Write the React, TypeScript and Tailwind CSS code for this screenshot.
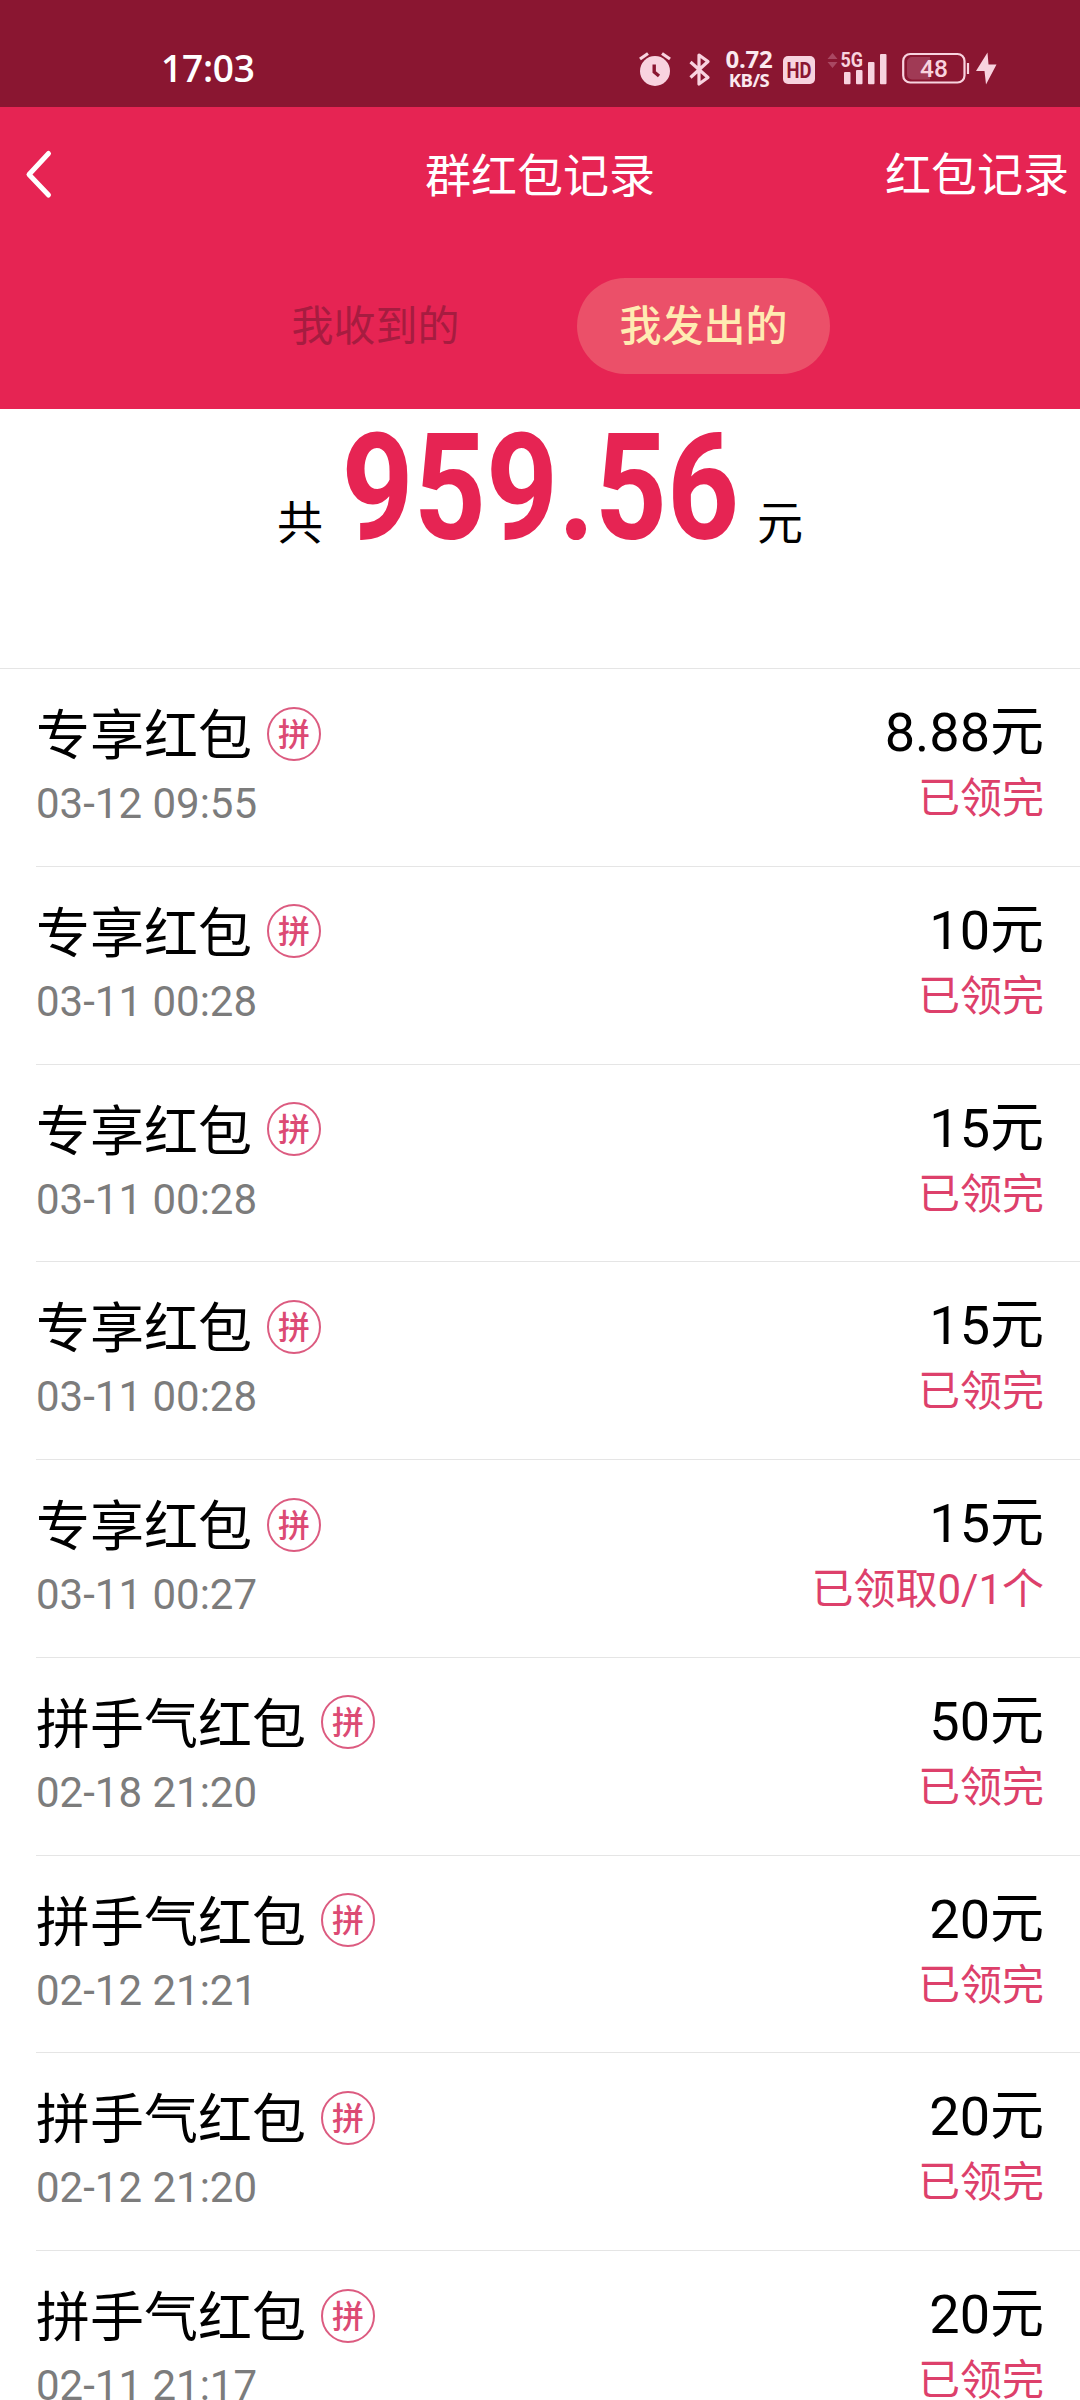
type Packet = { title: string; time: string; amount: string; status: string };

const packets: Packet[] = [
  { title: '专享红包', time: '03-12 09:55', amount: '8.88', status: '已领完' },
  { title: '专享红包', time: '03-11 00:28', amount: '10', status: '已领完' },
  { title: '专享红包', time: '03-11 00:28', amount: '15', status: '已领完' },
  { title: '专享红包', time: '03-11 00:28', amount: '15', status: '已领完' },
  { title: '专享红包', time: '03-11 00:27', amount: '15', status: '已领取0/1个' },
  { title: '拼手气红包', time: '02-18 21:20', amount: '50', status: '已领完' },
  { title: '拼手气红包', time: '02-12 21:21', amount: '20', status: '已领完' },
  { title: '拼手气红包', time: '02-12 21:20', amount: '20', status: '已领完' },
  { title: '拼手气红包', time: '02-11 21:17', amount: '20', status: '已领完' },
];

function AlarmIcon() {
  return (
    <svg className="h-9 w-8" viewBox="0 0 32 36" fill="none">
      <path d="M1 8 9 2.500M31 8 23 2.500" stroke="#f8d3df" strokeWidth="3.200" />
      <circle cx="16" cy="20" r="15" fill="#f8d3df" />
      <path d="M15.200 13.500v7.500l4.800 4" stroke="#8a1631" strokeWidth="3.400" />
    </svg>
  );
}

function BluetoothIcon() {
  return (
    <svg className="ml-[18px] h-9 w-[22px]" viewBox="0 0 22 36" fill="none">
      <path d="M1.500 11 19 26.500 10 33V4l9 6.500L1.500 26.500" stroke="#f8d3df" strokeWidth="3.200" strokeLinejoin="round" />
    </svg>
  );
}

function SignalIcon() {
  return (
    <svg className="ml-[11px] h-9 w-[62px]" viewBox="0 0 62 36">
      <path d="M1.500 8 6.500 2l5 6zM1.500 11l5 6 5-6z" fill="#a94862" />
      <text x="14.500" y="16" fill="#f8d3df" fontFamily="Roboto" fontWeight="700" fontSize="20" textLength="22.500" lengthAdjust="spacingAndGlyphs">5G</text>
      <g fill="#f8d3df">
        <rect x="18" y="21" width="6.500" height="12.300" rx="1" />
        <rect x="30" y="19" width="6.500" height="14.300" rx="1" />
        <rect x="42" y="11" width="6.500" height="22.300" rx="1" />
        <rect x="54" y="3" width="6.500" height="30.300" rx="1" />
      </g>
    </svg>
  );
}

function BatteryIcon() {
  return (
    <svg className="ml-[14px] h-9 w-[68px]" viewBox="0 0 68 36" fill="none">
      <path d="M10 6h18v22.500H10a5 5 0 0 1-5-5v-12.500a5 5 0 0 1 5-5z" fill="#a03a55" />
      <rect x="1.200" y="3" width="61.300" height="28.500" rx="7" stroke="#f8d3df" strokeWidth="2.200" />
      <path d="M66 12v11" stroke="#f8d3df" strokeWidth="2.200" />
      <text x="32" y="26" textAnchor="middle" fill="#f8d3df" fontFamily="Roboto" fontWeight="500" fontSize="24.500">48</text>
    </svg>
  );
}

function StatusBar() {
  return (
    <div className="flex h-[107px] items-start bg-[#8a1631] pt-[51px]">
      <div className="-mt-[1px] ml-[161px] h-9 w-[478px] font-['Open_Sans'] text-[37px] leading-9 font-semibold tracking-[-0.2px] text-white">17:03</div>
      <AlarmIcon />
      <BluetoothIcon />
      <div className="-mt-[3px] ml-[10px] w-[56px] text-center font-['Open_Sans'] font-bold whitespace-nowrap text-[#fbe9ef]">
        <div className="text-[24px] leading-[22px] tracking-[-0.3px]">0.72</div>
        <div className="text-[18.500px] leading-[20px] tracking-[-0.5px]">KB/S</div>
      </div>
      <div className="mt-[5px] ml-[6px] flex h-7 w-8 items-center justify-center rounded-[5px] bg-[#f8d3df] font-['Roboto'] text-[22px] font-bold text-[#8a1631]">
        <span className="scale-x-[0.84]">HD</span>
      </div>
      <SignalIcon />
      <BatteryIcon />
      <svg className="ml-[5px] h-9 w-[22px]" viewBox="0 0 22 36" fill="#f8d3df">
        <path d="M12.500 1.500 1 20h8.500L11 33.500 21.500 13.500h-8z" />
      </svg>
    </div>
  );
}

function Header() {
  return (
    <header className="flex h-[302px] flex-col bg-[#e62453] text-white">
      <div className="grid h-[136px] grid-cols-3 items-center">
        <svg className="-mt-[2px] ml-6 h-14 w-8" viewBox="0 0 32 56" fill="none">
          <path d="M24.500 7.500 5 28.500 24.500 49" stroke="white" strokeWidth="5" strokeLinecap="round" strokeLinejoin="round" />
        </svg>
        <h1 className="mt-[2px] text-center text-[46px] leading-[60px] whitespace-nowrap">群红包记录</h1>
        <div className="-mt-[1px] pr-[11px] text-right text-[46px] leading-[60px] whitespace-nowrap">红包记录</div>
      </div>
      <div className="mt-[35px] flex items-center">
        <div className="ml-[249px] flex h-24 w-[253px] items-center justify-center text-[42px] text-[#a61c40]">我收到的</div>
        <div className="ml-[75px] flex h-24 w-[253px] items-center justify-center rounded-full bg-[#eb5069] text-[42px] font-medium text-[#ffebb2]">我发出的</div>
      </div>
    </header>
  );
}

function Total() {
  return (
    <section className="flex h-[259px] items-baseline justify-center text-[46px] text-black">
      <span>共</span>
      <span className="mx-[17px] flex w-[400px] justify-center font-['Roboto'] text-[149px] leading-[158px] font-bold text-[#e62453]">
        <span className="scale-x-[0.845]">959.56</span>
      </span>
      <span>元</span>
    </section>
  );
}

function Row({ item, first }: { item: Packet; first: boolean }) {
  return (
    <li className={first ? 'h-[197.750px] border-t border-[#e5e5e5] pl-9' : 'h-[197.750px] pl-9'}>
      <div className={first ? 'flex h-full justify-between pr-9' : 'flex h-full justify-between border-t border-[#e5e5e5] pr-9'}>
        <div className="pt-[34px]">
          <div className="flex items-center">
            <span className="text-[54px] leading-[68px]">{item.title}</span>
            <span className="mb-[7px] ml-[15px] flex h-[54px] w-[54px] items-center justify-center rounded-full border-[2.500px] border-[#dc5b80] pt-[2px] text-[32px] leading-none font-medium text-[#dc4a74]">拼</span>
          </div>
          <div className="-mt-[1px] text-[42px] leading-[68px] text-[#7c7c7c]">{item.time}</div>
        </div>
        <div className="pt-[30px] text-right">
          <div className="text-[54px] leading-[68px]">{item.amount}元</div>
          <div className="text-[42px] leading-[63px] text-[#dd406b]">{item.status}</div>
        </div>
      </div>
    </li>
  );
}

export default function App() {
  return (
    <main className="h-[2400px] w-[1080px] overflow-hidden bg-white font-['Roboto','Noto_Sans_CJK_SC',sans-serif] text-black">
      <StatusBar />
      <Header />
      <Total />
      <ul>
        {packets.map((p, i) => (
          <Row key={i} item={p} first={i === 0} />
        ))}
      </ul>
    </main>
  );
}
